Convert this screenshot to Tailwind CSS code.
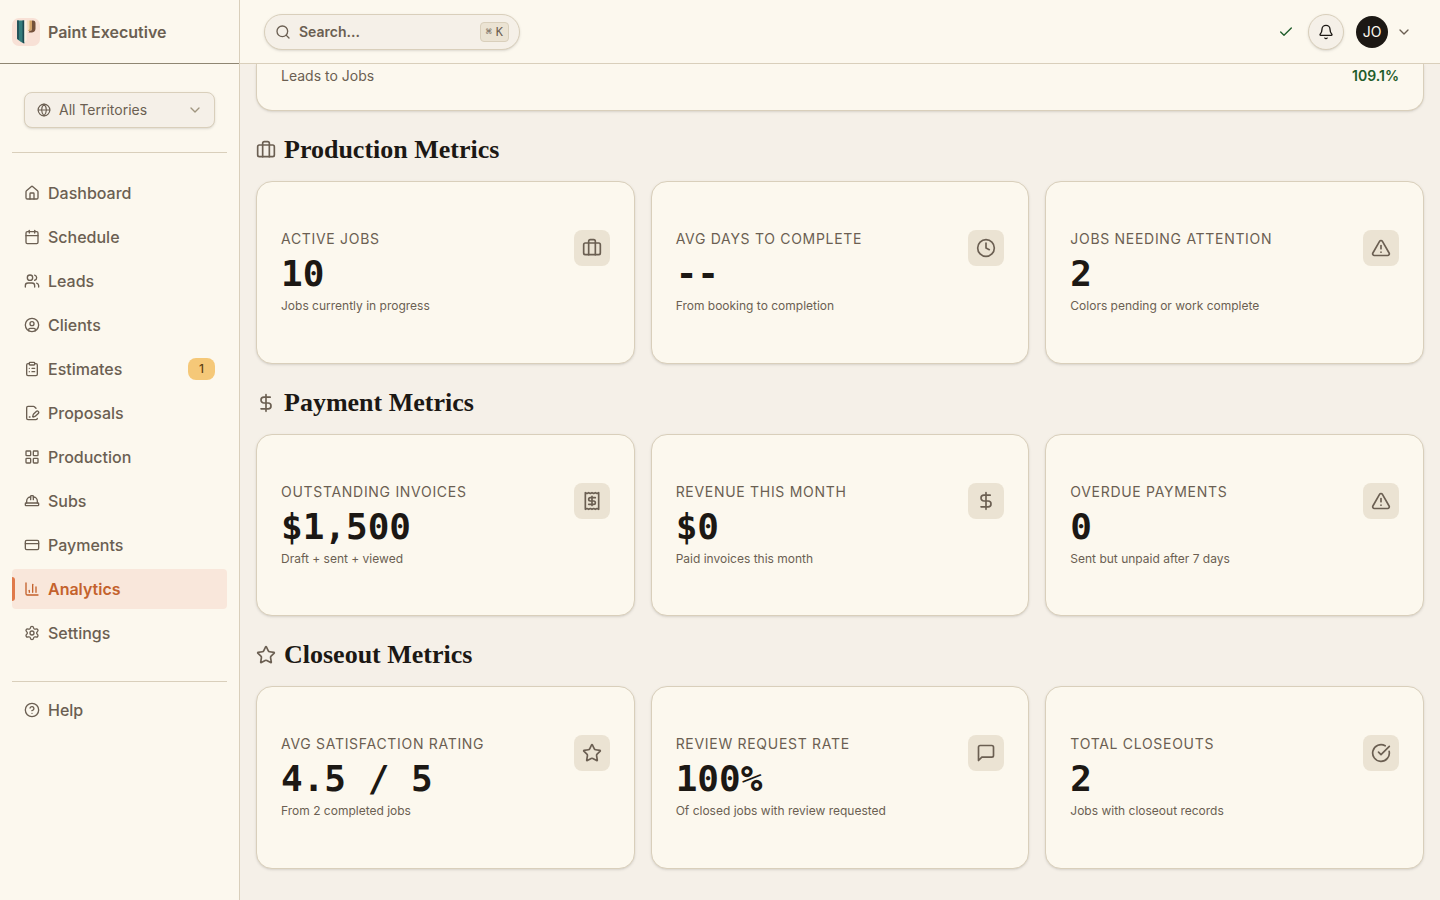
<!DOCTYPE html>
<html lang="en">
<head>
    <meta charset="utf-8">
    <meta name="viewport" content="width=device-width, initial-scale=1">
    <title>Paint Executive - Analytics</title>
    <script src="https://cdn.jsdelivr.net/npm/@tailwindcss/browser@4"></script>
</head>
<body class="h-screen flex overflow-hidden bg-[#f5f0e8] text-[#6b5f52] font-['Inter',sans-serif] antialiased [stroke-linecap:round] [stroke-linejoin:round]">

    <!-- Icon set -->
    <svg class="hidden" aria-hidden="true">
        <symbol id="i-globe" viewBox="0 0 24 24"><circle cx="12" cy="12" r="10"/><path d="M12 2a14.5 14.5 0 0 0 0 20 14.5 14.5 0 0 0 0-20"/><path d="M2 12h20"/></symbol>
        <symbol id="i-chevron" viewBox="0 0 24 24"><path d="m6 9 6 6 6-6"/></symbol>
        <symbol id="i-home" viewBox="0 0 24 24"><path d="M15 21v-8a1 1 0 0 0-1-1h-4a1 1 0 0 0-1 1v8"/><path d="M3 10a2 2 0 0 1 .709-1.528l7-5.999a2 2 0 0 1 2.582 0l7 5.999A2 2 0 0 1 21 10v9a2 2 0 0 1-2 2H5a2 2 0 0 1-2-2z"/></symbol>
        <symbol id="i-calendar" viewBox="0 0 24 24"><path d="M8 2v4"/><path d="M16 2v4"/><rect width="18" height="18" x="3" y="4" rx="2"/><path d="M3 10h18"/></symbol>
        <symbol id="i-users" viewBox="0 0 24 24"><path d="M16 21v-2a4 4 0 0 0-4-4H6a4 4 0 0 0-4 4v2"/><circle cx="9" cy="7" r="4"/><path d="M22 21v-2a4 4 0 0 0-3-3.87"/><path d="M16 3.13a4 4 0 0 1 0 7.75"/></symbol>
        <symbol id="i-user" viewBox="0 0 24 24"><circle cx="12" cy="12" r="10"/><circle cx="12" cy="10" r="3"/><path d="M7 20.662V19a2 2 0 0 1 2-2h6a2 2 0 0 1 2 2v1.662"/></symbol>
        <symbol id="i-clipboard" viewBox="0 0 24 24"><rect width="8" height="4" x="8" y="2" rx="1"/><path d="M16 4h2a2 2 0 0 1 2 2v14a2 2 0 0 1-2 2H6a2 2 0 0 1-2-2V6a2 2 0 0 1 2-2h2"/><path d="M12 11h4"/><path d="M12 16h4"/><path d="M8 11h.01"/><path d="M8 16h.01"/></symbol>
        <symbol id="i-proposal" viewBox="0 0 24 24"><path d="m18 5-2.414-2.414A2 2 0 0 0 14.172 2H6a2 2 0 0 0-2 2v16a2 2 0 0 0 2 2h12a2 2 0 0 0 2-2"/><path d="M21.378 12.626a1 1 0 0 0-3.004-3.004l-4.010 4.012a2 2 0 0 0-.506.854l-.837 2.870a.5.5 0 0 0 .62.62l2.870-.837a2 2 0 0 0 .854-.506z"/><path d="M8 18h1"/></symbol>
        <symbol id="i-grid" viewBox="0 0 24 24"><rect width="7" height="7" x="3" y="3" rx="1"/><rect width="7" height="7" x="14" y="3" rx="1"/><rect width="7" height="7" x="14" y="14" rx="1"/><rect width="7" height="7" x="3" y="14" rx="1"/></symbol>
        <symbol id="i-hardhat" viewBox="0 0 24 24"><path d="M10 10V5a1 1 0 0 1 1-1h2a1 1 0 0 1 1 1v5"/><path d="M14 6a6 6 0 0 1 6 6v3"/><path d="M4 15v-3a6 6 0 0 1 6-6"/><rect x="2" y="15" width="20" height="4" rx="1"/></symbol>
        <symbol id="i-card" viewBox="0 0 24 24"><rect width="20" height="14" x="2" y="5" rx="2"/><path d="M2 10h20"/></symbol>
        <symbol id="i-chart" viewBox="0 0 24 24"><path d="M3 3v16a2 2 0 0 0 2 2h16"/><path d="M18 17V9"/><path d="M13 17V5"/><path d="M8 17v-3"/></symbol>
        <symbol id="i-settings" viewBox="0 0 24 24"><path d="M9.671 4.136a2.34 2.34 0 0 1 4.659 0 2.34 2.34 0 0 0 3.319 1.915 2.34 2.34 0 0 1 2.33 4.033 2.34 2.34 0 0 0 0 3.831 2.34 2.34 0 0 1-2.33 4.033 2.34 2.34 0 0 0-3.319 1.915 2.34 2.34 0 0 1-4.659 0 2.34 2.34 0 0 0-3.32-1.915 2.34 2.34 0 0 1-2.33-4.033 2.34 2.34 0 0 0 0-3.831A2.34 2.34 0 0 1 6.35 6.051a2.34 2.34 0 0 0 3.319-1.915"/><circle cx="12" cy="12" r="3"/></symbol>
        <symbol id="i-help" viewBox="0 0 24 24"><circle cx="12" cy="12" r="10"/><path d="M9.09 9a3 3 0 0 1 5.83 1c0 2-3 3-3 3"/><path d="M12 17h.01"/></symbol>
        <symbol id="i-search" viewBox="0 0 24 24"><circle cx="11" cy="11" r="8"/><path d="m21 21-4.3-4.3"/></symbol>
        <symbol id="i-check" viewBox="0 0 24 24"><path d="M20 6 9 17l-5-5"/></symbol>
        <symbol id="i-bell" viewBox="0 0 24 24"><path d="M10.268 21a2 2 0 0 0 3.464 0"/><path d="M3.262 15.326A1 1 0 0 0 4 17h16a1 1 0 0 0 .74-1.673C19.41 13.956 18 12.499 18 8A6 6 0 0 0 6 8c0 4.499-1.411 5.956-2.738 7.326"/></symbol>
        <symbol id="i-luggage" viewBox="0 0 24 24"><path d="M16 20V4a2 2 0 0 0-2-2h-4a2 2 0 0 0-2 2v16"/><rect width="20" height="14" x="2" y="6" rx="2"/></symbol>
        <symbol id="i-dollar" viewBox="0 0 24 24"><path d="M12 2v20"/><path d="M17 5H9.5a3.5 3.5 0 0 0 0 7h5a3.5 3.5 0 0 1 0 7H6"/></symbol>
        <symbol id="i-star" viewBox="0 0 24 24"><path d="M11.525 2.295a.53.53 0 0 1 .95 0l2.31 4.679a2.123 2.123 0 0 0 1.595 1.16l5.166.756a.53.53 0 0 1 .294.904l-3.736 3.638a2.123 2.123 0 0 0-.611 1.878l.882 5.14a.53.53 0 0 1-.771.56l-4.618-2.428a2.122 2.122 0 0 0-1.973 0L6.396 21.01a.53.53 0 0 1-.77-.56l.881-5.139a2.122 2.122 0 0 0-.611-1.879L2.16 9.795a.53.53 0 0 1 .294-.906l5.165-.755a2.122 2.122 0 0 0 1.597-1.16z"/></symbol>
        <symbol id="i-clock" viewBox="0 0 24 24"><circle cx="12" cy="12" r="10"/><path d="M12 6v6l4 2"/></symbol>
        <symbol id="i-alert" viewBox="0 0 24 24"><path d="m21.73 18-8-14a2 2 0 0 0-3.48 0l-8 14A2 2 0 0 0 4 21h16a2 2 0 0 0 1.73-3"/><path d="M12 9v4"/><path d="M12 17h.01"/></symbol>
        <symbol id="i-receipt" viewBox="0 0 24 24"><path d="M4 2v20l2-1 2 1 2-1 2 1 2-1 2 1 2-1 2 1V2l-2 1-2-1-2 1-2-1-2 1-2-1-2 1Z"/><path d="M16 8h-6a2 2 0 1 0 0 4h4a2 2 0 1 1 0 4H8"/><path d="M12 17.5v-11"/></symbol>
        <symbol id="i-message" viewBox="0 0 24 24"><path d="M21 15a2 2 0 0 1-2 2H7l-4 4V5a2 2 0 0 1 2-2h14a2 2 0 0 1 2 2z"/></symbol>
        <symbol id="i-done" viewBox="0 0 24 24"><path d="M21.801 10A10 10 0 1 1 17 3.335"/><path d="m9 11 3 3L22 4"/></symbol>
    </svg>

    <!-- Sidebar -->
    <aside class="w-60 shrink-0 flex flex-col bg-[#fcf8ee] border-r border-[#d9cfbb]">
        <a href="#" class="h-16 shrink-0 flex items-center gap-2 px-3 border-b border-[#8f8672]">
            <svg class="size-7" viewBox="0 0 28 28">
                <rect width="28" height="28" rx="7" fill="#f8e1d6"/>
                <path d="M5 2.500h7.500v23L9 24l-4-3z" fill="#347c7c"/>
                <path d="M5 2.500h2v19.500l-2-1.500z" fill="#24545a"/>
                <path d="M10.500 2.500h1.500v23l-1.500-1z" fill="#1d4850"/>
                <path d="M12.500 2.500h2v20l-2 2z" fill="#fbf1e2"/>
                <path d="M15 2.500h4v9.500l-3 1.500z" fill="#f5dfba"/>
                <path d="M17.500 2.500h2.500v8q0 2-2 2.500h-2l1.500-2z" fill="#d3a368"/>
                <path d="M20 2.500h1q2.500 0 2.500 3v5q0 3.500-3.500 4h-3.500l1-1.500q2.500 0 2.500-2.500z" fill="#73503a"/>
            </svg>
            <span class="text-base font-semibold">Paint Executive</span>
        </a>

        <div class="relative mx-6 mt-7 mb-6">
            <svg class="absolute left-3 top-[10px] size-4 p-px fill-none stroke-current stroke-2"><use href="#i-globe"/></svg>
            <select aria-label="Territory" class="block w-full h-9 pl-[34px] pr-8 appearance-none rounded-lg border border-[#d9cfbb] bg-[#f5f0e8] text-sm shadow-sm">
                <option>All Territories</option>
            </select>
            <svg class="absolute right-3 top-[10px] size-4 fill-none stroke-[#a0967f] stroke-2 pointer-events-none"><use href="#i-chevron"/></svg>
        </div>

        <nav class="mx-3 pt-5 pb-7 border-y border-[#d9cfbb] flex flex-col gap-1 text-base font-medium">
            <a href="#" class="h-10 px-3 flex items-center gap-2 rounded"><svg class="size-4 fill-none stroke-current stroke-2"><use href="#i-home"/></svg>Dashboard</a>
            <a href="#" class="h-10 px-3 flex items-center gap-2 rounded"><svg class="size-4 fill-none stroke-current stroke-2"><use href="#i-calendar"/></svg>Schedule</a>
            <a href="#" class="h-10 px-3 flex items-center gap-2 rounded"><svg class="size-4 fill-none stroke-current stroke-2"><use href="#i-users"/></svg>Leads</a>
            <a href="#" class="h-10 px-3 flex items-center gap-2 rounded"><svg class="size-4 fill-none stroke-current stroke-2"><use href="#i-user"/></svg>Clients</a>
            <a href="#" class="h-10 px-3 flex items-center gap-2 rounded"><svg class="size-4 fill-none stroke-current stroke-2"><use href="#i-clipboard"/></svg>Estimates
                <span class="ml-auto w-[27px] h-[22px] flex items-center justify-center rounded-lg bg-[#f5c878] text-xs text-[#5e4312]">1</span>
            </a>
            <a href="#" class="h-10 px-3 flex items-center gap-2 rounded"><svg class="size-4 fill-none stroke-current stroke-2"><use href="#i-proposal"/></svg>Proposals</a>
            <a href="#" class="h-10 px-3 flex items-center gap-2 rounded"><svg class="size-4 fill-none stroke-current stroke-2"><use href="#i-grid"/></svg>Production</a>
            <a href="#" class="h-10 px-3 flex items-center gap-2 rounded"><svg class="size-4 fill-none stroke-current stroke-2"><use href="#i-hardhat"/></svg>Subs</a>
            <a href="#" class="h-10 px-3 flex items-center gap-2 rounded"><svg class="size-4 fill-none stroke-current stroke-2"><use href="#i-card"/></svg>Payments</a>
            <a href="#" aria-current="page" class="relative h-10 px-3 flex items-center gap-2 rounded bg-[#f9e7db] text-[#c4622d] font-semibold">
                <span class="absolute left-0 top-2 w-[3px] h-6 rounded-r-full bg-[#e07a4b]"></span>
                <svg class="size-4 fill-none stroke-current stroke-2"><use href="#i-chart"/></svg>Analytics
            </a>
            <a href="#" class="h-10 px-3 flex items-center gap-2 rounded"><svg class="size-4 fill-none stroke-current stroke-2"><use href="#i-settings"/></svg>Settings</a>
        </nav>
        <div class="px-3 pt-2 text-base font-medium">
            <a href="#" class="h-10 px-3 flex items-center gap-2 rounded"><svg class="size-4 fill-none stroke-current stroke-2"><use href="#i-help"/></svg>Help</a>
        </div>
    </aside>

    <div class="flex-1 min-w-0 flex flex-col">
        <!-- Top bar -->
        <header class="h-16 shrink-0 flex items-center justify-between pl-6 pr-7 bg-[#fcf8ee] border-b border-[#d9cfbb]">
            <div class="w-64 h-9 px-[10px] flex items-center gap-2 rounded-full border border-[#d9cfbb] bg-[#f5f0e8] shadow-sm">
                <svg class="size-4 shrink-0 fill-none stroke-current stroke-2"><use href="#i-search"/></svg>
                <input type="text" aria-label="Search" placeholder="Search..." class="flex-1 min-w-0 bg-transparent outline-none text-sm font-semibold placeholder:text-[#6b5f52]">
                <kbd class="h-5 px-[5px] flex items-center gap-1 rounded border border-[#d9cfbb] bg-[#ebe3d3] font-['DejaVu_Sans_Mono',monospace] text-[10px]">⌘ <span class="text-xs">K</span></kbd>
            </div>
            <div class="flex items-center gap-3">
                <svg class="size-4 mr-[2px] fill-none stroke-[#1f5c2a] stroke-2"><use href="#i-check"/></svg>
                <button aria-label="Notifications" class="size-9 flex items-center justify-center rounded-full border border-[#d9cfbb] bg-[#f5f0e8] text-[#1c1814] shadow-sm">
                    <svg class="size-4 fill-none stroke-current stroke-2"><use href="#i-bell"/></svg>
                </button>
                <button aria-label="Account menu" class="flex items-center gap-2">
                    <span class="size-8 flex items-center justify-center rounded-full bg-[#1c1814] text-[#fcf8ee] text-sm">JO</span>
                    <svg class="size-4 fill-none stroke-current stroke-2"><use href="#i-chevron"/></svg>
                </button>
            </div>
        </header>

        <main class="flex-1 overflow-hidden px-4 pb-8 flex flex-col gap-6">
            <div class="px-6 pt-[2px] pb-6 flex justify-between rounded-b-2xl border border-t-0 border-[#d9cfbb] bg-[#fcf8ee] shadow-sm text-sm">
                <span>Leads to Jobs</span>
                <span class="font-semibold text-[#1f5c2a]">109.1%</span>
            </div>

            <section>
                <h2 class="mb-4 flex items-center gap-2 font-['Liberation_Serif',serif] text-[26px] leading-[30px] font-bold text-[#1c1814]">
                    <svg class="size-5 fill-none stroke-[#6b5f52] stroke-2"><use href="#i-luggage"/></svg>Production Metrics
                </h2>
                <div class="grid grid-cols-3 gap-4">
                    <div class="px-6 py-12 flex items-start justify-between rounded-2xl border border-[#d9cfbb] bg-[#fcf8ee] shadow-sm">
                        <div>
                            <p class="text-sm leading-[18px] tracking-wider uppercase">Active Jobs</p>
                            <p class="mt-[6px] font-['DejaVu_Sans_Mono',monospace] text-4xl font-bold text-[#1c1814]">10</p>
                            <p class="mt-1 text-xs leading-snug">Jobs currently in progress</p>
                        </div>
                        <span class="size-9 flex items-center justify-center rounded-lg bg-[#ebe3d3]"><svg class="size-5 fill-none stroke-current stroke-2"><use href="#i-luggage"/></svg></span>
                    </div>
                    <div class="px-6 py-12 flex items-start justify-between rounded-2xl border border-[#d9cfbb] bg-[#fcf8ee] shadow-sm">
                        <div>
                            <p class="text-sm leading-[18px] tracking-wider uppercase">Avg Days to Complete</p>
                            <p class="mt-[6px] font-['DejaVu_Sans_Mono',monospace] text-4xl font-bold text-[#1c1814]">--</p>
                            <p class="mt-1 text-xs leading-snug">From booking to completion</p>
                        </div>
                        <span class="size-9 flex items-center justify-center rounded-lg bg-[#ebe3d3]"><svg class="size-5 fill-none stroke-current stroke-2"><use href="#i-clock"/></svg></span>
                    </div>
                    <div class="px-6 py-12 flex items-start justify-between rounded-2xl border border-[#d9cfbb] bg-[#fcf8ee] shadow-sm">
                        <div>
                            <p class="text-sm leading-[18px] tracking-wider uppercase">Jobs Needing Attention</p>
                            <p class="mt-[6px] font-['DejaVu_Sans_Mono',monospace] text-4xl font-bold text-[#1c1814]">2</p>
                            <p class="mt-1 text-xs leading-snug">Colors pending or work complete</p>
                        </div>
                        <span class="size-9 flex items-center justify-center rounded-lg bg-[#ebe3d3]"><svg class="size-5 fill-none stroke-current stroke-2"><use href="#i-alert"/></svg></span>
                    </div>
                </div>
            </section>

            <section>
                <h2 class="mb-4 flex items-center gap-2 font-['Liberation_Serif',serif] text-[26px] leading-[30px] font-bold text-[#1c1814]">
                    <svg class="size-5 fill-none stroke-[#6b5f52] stroke-2"><use href="#i-dollar"/></svg>Payment Metrics
                </h2>
                <div class="grid grid-cols-3 gap-4">
                    <div class="px-6 py-12 flex items-start justify-between rounded-2xl border border-[#d9cfbb] bg-[#fcf8ee] shadow-sm">
                        <div>
                            <p class="text-sm leading-[18px] tracking-wider uppercase">Outstanding Invoices</p>
                            <p class="mt-[6px] font-['DejaVu_Sans_Mono',monospace] text-4xl font-bold text-[#1c1814]">$1,500</p>
                            <p class="mt-1 text-xs leading-snug">Draft + sent + viewed</p>
                        </div>
                        <span class="size-9 flex items-center justify-center rounded-lg bg-[#ebe3d3]"><svg class="size-5 fill-none stroke-current stroke-2"><use href="#i-receipt"/></svg></span>
                    </div>
                    <div class="px-6 py-12 flex items-start justify-between rounded-2xl border border-[#d9cfbb] bg-[#fcf8ee] shadow-sm">
                        <div>
                            <p class="text-sm leading-[18px] tracking-wider uppercase">Revenue This Month</p>
                            <p class="mt-[6px] font-['DejaVu_Sans_Mono',monospace] text-4xl font-bold text-[#1c1814]">$0</p>
                            <p class="mt-1 text-xs leading-snug">Paid invoices this month</p>
                        </div>
                        <span class="size-9 flex items-center justify-center rounded-lg bg-[#ebe3d3]"><svg class="size-5 fill-none stroke-current stroke-2"><use href="#i-dollar"/></svg></span>
                    </div>
                    <div class="px-6 py-12 flex items-start justify-between rounded-2xl border border-[#d9cfbb] bg-[#fcf8ee] shadow-sm">
                        <div>
                            <p class="text-sm leading-[18px] tracking-wider uppercase">Overdue Payments</p>
                            <p class="mt-[6px] font-['DejaVu_Sans_Mono',monospace] text-4xl font-bold text-[#1c1814]">0</p>
                            <p class="mt-1 text-xs leading-snug">Sent but unpaid after 7 days</p>
                        </div>
                        <span class="size-9 flex items-center justify-center rounded-lg bg-[#ebe3d3]"><svg class="size-5 fill-none stroke-current stroke-2"><use href="#i-alert"/></svg></span>
                    </div>
                </div>
            </section>

            <section>
                <h2 class="mb-4 flex items-center gap-2 font-['Liberation_Serif',serif] text-[26px] leading-[30px] font-bold text-[#1c1814]">
                    <svg class="size-5 fill-none stroke-[#6b5f52] stroke-2"><use href="#i-star"/></svg>Closeout Metrics
                </h2>
                <div class="grid grid-cols-3 gap-4">
                    <div class="px-6 py-12 flex items-start justify-between rounded-2xl border border-[#d9cfbb] bg-[#fcf8ee] shadow-sm">
                        <div>
                            <p class="text-sm leading-[18px] tracking-wider uppercase">Avg Satisfaction Rating</p>
                            <p class="mt-[6px] font-['DejaVu_Sans_Mono',monospace] text-4xl font-bold text-[#1c1814]">4.5 / 5</p>
                            <p class="mt-1 text-xs leading-snug">From 2 completed jobs</p>
                        </div>
                        <span class="size-9 flex items-center justify-center rounded-lg bg-[#ebe3d3]"><svg class="size-5 fill-none stroke-current stroke-2"><use href="#i-star"/></svg></span>
                    </div>
                    <div class="px-6 py-12 flex items-start justify-between rounded-2xl border border-[#d9cfbb] bg-[#fcf8ee] shadow-sm">
                        <div>
                            <p class="text-sm leading-[18px] tracking-wider uppercase">Review Request Rate</p>
                            <p class="mt-[6px] font-['DejaVu_Sans_Mono',monospace] text-4xl font-bold text-[#1c1814]">100%</p>
                            <p class="mt-1 text-xs leading-snug">Of closed jobs with review requested</p>
                        </div>
                        <span class="size-9 flex items-center justify-center rounded-lg bg-[#ebe3d3]"><svg class="size-5 fill-none stroke-current stroke-2"><use href="#i-message"/></svg></span>
                    </div>
                    <div class="px-6 py-12 flex items-start justify-between rounded-2xl border border-[#d9cfbb] bg-[#fcf8ee] shadow-sm">
                        <div>
                            <p class="text-sm leading-[18px] tracking-wider uppercase">Total Closeouts</p>
                            <p class="mt-[6px] font-['DejaVu_Sans_Mono',monospace] text-4xl font-bold text-[#1c1814]">2</p>
                            <p class="mt-1 text-xs leading-snug">Jobs with closeout records</p>
                        </div>
                        <span class="size-9 flex items-center justify-center rounded-lg bg-[#ebe3d3]"><svg class="size-5 fill-none stroke-current stroke-2"><use href="#i-done"/></svg></span>
                    </div>
                </div>
            </section>
        </main>
    </div>
</body>
</html>
